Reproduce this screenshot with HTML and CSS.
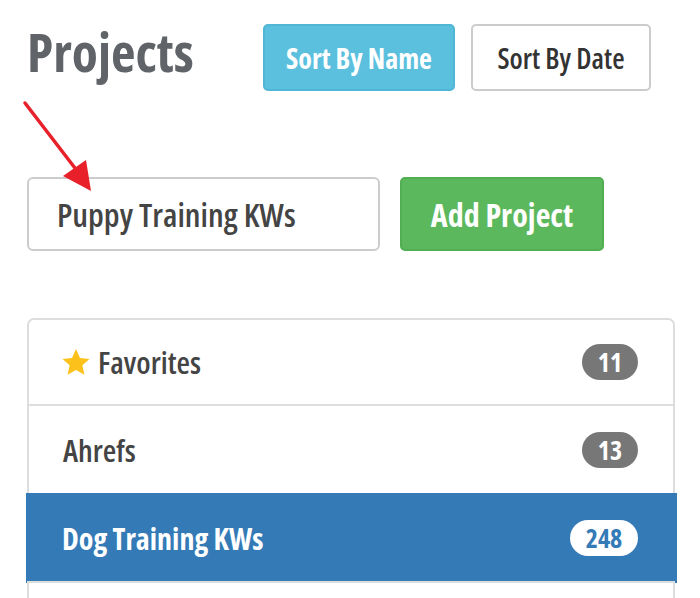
FILE: index.html
```html
<!DOCTYPE html>
<html>
<head>
<meta charset="utf-8">
<link rel="stylesheet" href="styles.css">
</head>
<body>
<div class="page">
  <div class="header">
    <h1 class="title">Projects</h1>
    <div class="sort">
      <button class="btn btn-info">Sort By Name</button>
      <button class="btn btn-default">Sort By Date</button>
    </div>
  </div>
  <div class="add-row">
    <div class="input">Puppy Training KWs</div>
    <button class="btn btn-success">Add Project</button>
  </div>
  <div class="list">
    <div class="item">
      <span class="label"><svg class="star" viewBox="0 0 24 24"><path d="M12 1.6l3.2 7.1 7.6.8-5.7 5.1 1.6 7.6L12 18.3l-6.7 3.9 1.6-7.6L1.2 9.5l7.6-.8z" fill="#fcc21b"/></svg>Favorites</span>
      <span class="badge">11</span>
    </div>
    <div class="item second">
      <span class="label">Ahrefs</span>
      <span class="badge">13</span>
    </div>
    <div class="item active">
      <span class="label">Dog Training KWs</span>
      <span class="badge">248</span>
    </div>
    <div class="item last"></div>
  </div>
  <svg class="arrow" width="200" height="200" viewBox="0 0 200 200">
    <line x1="25" y1="103" x2="78" y2="172" stroke="#e8202a" stroke-width="3.5" stroke-linecap="round"/>
    <polygon points="91,191 63,176 86,160" fill="#e8202a"/>
  </svg>
</div>
</body>
</html>
```
FILE: styles.css
```css
* { box-sizing: border-box; }
body {
  margin: 0;
  background: #fff;
  font-family: "Open Sans", "DejaVu Sans Condensed", sans-serif;
  font-stretch: 75%;
}
.page {
  position: relative;
  padding: 24px 25px 0 27px;
  height: 598px;
  overflow: hidden;
}
.header {
  display: flex;
  align-items: flex-start;
  height: 67px;
}
.title {
  margin: 0;
  font-size: 53.5px;
  line-height: 55px;
  font-weight: 700;
  color: #606367;
  width: 236px;
}
.sort {
  display: flex;
  gap: 16px;
}
.btn {
  font-family: inherit;
  font-stretch: 75%;
  height: 67px;
  border-radius: 5px;
  border: 2px solid transparent;
  cursor: pointer;
  padding: 0;
}
.btn-info {
  width: 192px;
  background: #5bc0de;
  border-color: #50b6d6;
  color: #fff;
  font-size: 28px;
  font-weight: 700;
}
.btn-default {
  width: 180px;
  background: #fff;
  border-color: #ccc;
  color: #333;
  font-size: 28.5px;
  font-weight: 600;
}
.add-row {
  display: flex;
  gap: 20px;
  margin-top: 86px;
}
.input {
  width: 353px;
  height: 74px;
  border: 2px solid #ccc;
  border-radius: 6px;
  padding: 0 0 0 28px;
  display: flex;
  align-items: center;
  font-size: 33px;
  font-weight: 600;
  color: #444;
}
.btn-success {
  width: 204px;
  height: 74px;
  background: #5cb85c;
  border-color: #52ae52;
  color: #fff;
  font-size: 32px;
  font-weight: 700;
}
.list {
  margin-top: 67px;
  width: 648px;
}
.item {
  display: flex;
  align-items: center;
  justify-content: space-between;
  height: 88px;
  padding: 0 35px 0 34px;
  border: 2px solid #ddd;
  margin-top: -2px;
  background: #fff;
  font-size: 31px;
  font-weight: 600;
  color: #444;
}
.item:first-child {
  margin-top: 0;
  border-radius: 7px 7px 0 0;
}
.item.second {
  height: 91px;
}
.item.active {
  background: #337ab7;
  border-color: #337ab7;
  color: #fff;
  height: 90px;
  margin-right: -2px;
  margin-left: -1px;
  padding-left: 34px;
  padding-right: 37px;
  font-size: 30px;
  font-weight: 700;
}
.item.last {
  height: 60px;
  border-bottom: none;
}
.label {
  display: flex;
  align-items: center;
}
.star {
  width: 30px;
  height: 30px;
  margin-right: 7px;
  margin-left: -2px;
}
.badge {
  display: inline-block;
  min-width: 56px;
  height: 36px;
  padding: 0 12px;
  border-radius: 18px;
  background: #777;
  color: #fff;
  font-size: 26px;
  font-weight: 700;
  line-height: 36px;
  text-align: center;
}
.active .badge {
  background: #fff;
  color: #337ab7;
  min-width: 68px;
}
.arrow {
  position: absolute;
  left: 0;
  top: 0;
}
```
